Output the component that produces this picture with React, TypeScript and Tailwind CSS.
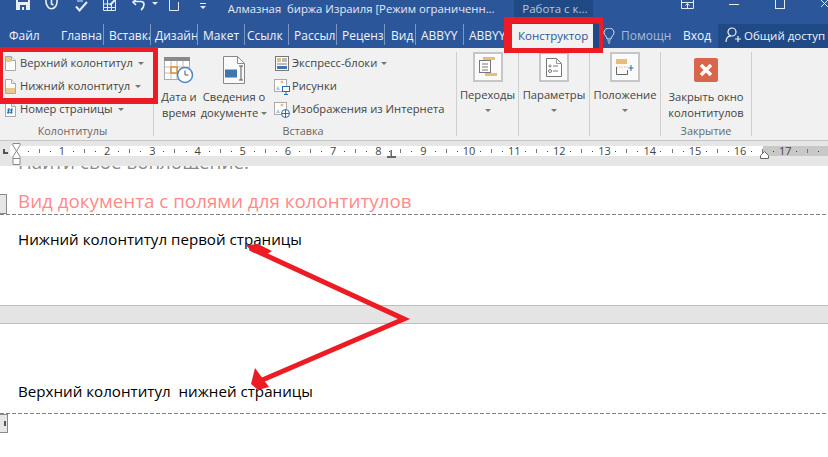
const font = "font-['Open_Sans','Liberation_Sans',sans-serif]";

const tabs = [
  { label: 'Главна', w: 'w-[49px]', pl: 'pl-[6px]' },
  { label: 'Вставка', w: 'w-[47px]', pl: 'pl-[5px]' },
  { label: 'Дизайн', w: 'w-[47px]', pl: 'pl-[4px]' },
  { label: 'Макет', w: 'w-[47px]', pl: 'pl-[5px]' },
  { label: 'Ссылк', w: 'w-[44px]', pl: 'pl-[2px]' },
  { label: 'Рассыл', w: 'w-[48px]', pl: 'pl-[5px]' },
  { label: 'Реценз', w: 'w-[48px]', pl: 'pl-[5px]' },
  { label: 'Вид', w: 'w-[31px]', pl: 'pl-[6px]' },
  { label: 'ABBYY', w: 'w-[48px]', pl: 'pl-[5px]' },
  { label: 'ABBYY', w: 'w-[48px]', pl: 'pl-[5px]' },
];

function PageIcon({ kind }: { kind: 'top' | 'bottom' | 'num' }) {
  return (
    <svg width="12" height="15" viewBox="0 0 12 15" className="shrink-0">
      <path d="M1.500.500h6l4 4v10h-10z" fill="#fff" stroke="#a8a8a8" />
      <path d="M7.500.500v4h4" fill="#eee" stroke="#a8a8a8" />
      {kind === 'top' && <rect x="2" y="1" width="5" height="5" fill="#ecc88f" />}
      {kind === 'bottom' && <rect x="2" y="9" width="9" height="5" fill="#ecc88f" />}
      {kind === 'num' && <path d="M5 6l-1 6M8 6l-1 6M3.200 8h5.600M3 10.200h5.600" stroke="#2b6cb0" strokeWidth="1.100" fill="none" />}
    </svg>
  );
}

function BoxButton({ label, children, w }: { label: string; children: React.ReactNode; w: string }) {
  return (
    <div className={`${w} shrink-0 flex flex-col items-center pt-[4px]`}>
      <div className="w-[30px] h-[30px] border-2 border-[#c6c6c6] bg-[#fafafa] flex items-center justify-center">{children}</div>
      <div className="mt-[4px] leading-[18px] whitespace-nowrap">{label}</div>
      <Caret className="mt-[5px]" />
    </div>
  );
}

function Caret({ className = '' }: { className?: string }) {
  return <span className={`inline-block w-0 h-0 border-x-[3px] border-x-transparent border-t-[3px] border-t-[#777] ${className}`} />;
}

function GroupLabel({ children, className = '' }: { children: React.ReactNode; className?: string }) {
  return <div className={`h-[18px] text-center text-[10.8px] leading-[18px] text-[#666] ${className}`}>{children}</div>;
}

function Sep() {
  return <div className="w-px h-[84px] mt-[4px] bg-[#cfcfcf] shrink-0" />;
}

function RulerCell({ n }: { n?: number }) {
  return (
    <div className={`${n ? 'w-[45.2px]' : 'w-[46px]'} shrink-0 flex items-center`}>
      <span className={`${n ? 'w-[12px]' : 'w-[12.8px]'} text-center text-[11px] leading-[10px]`}>{n}</span>
      <div className="flex-1 flex items-center justify-around">
        <span className="w-px h-px bg-[#444]" />
        <span className="w-px h-[4px] bg-[#777]" />
        <span className="w-px h-px bg-[#444]" />
      </div>
    </div>
  );
}

function Dashed() {
  return <div className="h-px shrink-0 bg-[repeating-linear-gradient(to_right,#808080_0,#808080_4px,transparent_4px,transparent_6px)]" />;
}

export default function App() {
  return (
    <div className={`relative w-[828px] h-[457px] overflow-hidden bg-white flex flex-col ${font}`}>
      {/* title bar */}
      <div className="h-[24px] shrink-0 flex items-start bg-[#2b579a] text-[#e4eaf4]">
        <svg width="14" height="10" viewBox="0 0 14 10" className="ml-[16px]">
          <path d="M0 0h14v10H0z" fill="#e8edf5" />
          <path d="M4 5h6v5H4z" fill="#2b579a" />
          <path d="M6 7h2v3H6z" fill="#e8edf5" />
          <path d="M2 0h10v2H2z" fill="#2b579a" />
        </svg>
        <svg width="13" height="10" viewBox="0 0 13 10" className="ml-[15px]" fill="none" stroke="#e8edf5" strokeWidth="1.600">
          <path d="M1 0c-.5 4 2 8.800 5.500 8.800S12.500 5 12 0" />
          <path d="M6.500 0v4l2 1" />
        </svg>
        <svg width="13" height="12" viewBox="0 0 13 12" className="ml-[17px]" fill="none" stroke="#e8edf5" strokeWidth="2">
          <path d="M1 6.500l3.500 4L12 2" />
          <path d="M2 1h6" strokeWidth="1" />
        </svg>
        <svg width="13" height="11" viewBox="0 0 13 11" className="ml-[15px]" fill="none" stroke="#e8edf5">
          <path d="M.5 0v10.500h12V0M.5 4h8M.5 7.500h12M4.500 0v10.500M8.500 4v6.500" />
          <path d="M7 5l5-5" strokeWidth="2" />
        </svg>
        <svg width="14" height="11" viewBox="0 0 14 11" className="ml-[16px]" fill="none" stroke="#e8edf5" strokeWidth="1.700">
          <path d="M1 1.500h8c4 0 4 5 0 8.500" />
          <path d="M4 0L1 2l3 3" />
        </svg>
        <span className="ml-[6px] mt-[2px] w-0 h-0 border-x-[3px] border-x-transparent border-t-[3px] border-t-[#e8edf5]" />
        <svg width="10" height="11" viewBox="0 0 10 11" className="ml-[11px]" fill="none" stroke="#e8edf5">
          <path d="M.5 0v10.500h9V2" />
        </svg>
        <div className="ml-[21px] mt-[3px] w-[6px] flex flex-col items-center">
          <span className="w-[6px] h-px bg-[#e8edf5]" />
          <span className="mt-[2px] w-0 h-0 border-x-[3px] border-x-transparent border-t-[3px] border-t-[#e8edf5]" />
        </div>
        <div className="ml-[22px] w-[268px] h-[18px] text-[11.3px] leading-[18px] whitespace-pre overflow-hidden">Алмазная  биржа Израиля [Режим ограниченн...</div>
        <div className="ml-[19px] w-[79px] h-[17px] pl-[8px] bg-[#1f4a86] text-[#b9c6db] text-[11.5px] leading-[17px] whitespace-nowrap">Работа с к...</div>
        <svg width="13" height="9" viewBox="0 0 13 9" className="ml-[88px]" fill="none" stroke="#e8edf5">
          <path d="M.5 0v8.500h12V0M.5 2.500h12M6.500 8V4M4.500 5.500l2-2 2 2" />
        </svg>
        <span className="ml-[35px] mt-[4px] w-[10px] h-px bg-[#e8edf5]" />
        <span className="ml-[36px] w-[10px] h-[9px] border border-t-0 border-[#e8edf5]" />
        <svg width="7" height="7" viewBox="0 0 7 7" className="ml-[36px]" fill="none" stroke="#e8edf5">
          <path d="M0 0l7 7M7 0L0 7" />
        </svg>
      </div>

      {/* tabs */}
      <div className="h-[24px] shrink-0 flex items-start bg-[#2b579a] text-[#f0f3f8] text-[12px] whitespace-nowrap">
        <div className="w-[55px] pl-[9px] pt-[3px] leading-[18px]">Файл</div>
        {tabs.map((t, i) => (
          <div key={i} className={`${t.w} ${t.pl} h-[21px] pt-[3px] leading-[18px] overflow-hidden border-r border-[#7b97c2]`}>{t.label}</div>
        ))}
        <div className="w-[81px] h-[24px] bg-[#f1f1f1] text-[#2b579a] pl-[6px] pt-[3px] leading-[18px] text-[11.5px]">Конструктор</div>
        <div className="w-[6px] h-[24px] bg-[#1f4a86]" />
        <svg width="12" height="16" viewBox="0 0 12 16" className="ml-[4px] mt-[4px]" fill="none" stroke="#dfe6f1">
          <path d="M4 11c0-3-3-3.500-3-6.500a5 4.500 0 0 1 10 0c0 3-3 3.500-3 6.500zM4.500 13h3M5 15h2" />
        </svg>
        <div className="ml-[6px] w-[62px] pt-[3px] leading-[18px] text-[#a9bbd8]">Помощн</div>
        <div className="w-[35px] pt-[3px] leading-[18px]">Вход</div>
        <div className="w-[110px] h-[24px] bg-[#1f4a86] pt-[3px] flex items-start">
          <svg width="16" height="16" viewBox="0 0 16 16" className="ml-[7px] shrink-0" fill="none" stroke="#f0f3f8" strokeWidth="1.200">
            <circle cx="7" cy="5" r="4" />
            <path d="M1 15c0-4 2.500-6 5-6.200M10 12h6M13 9v6" />
          </svg>
          <span className="ml-[3px] leading-[18px] text-[11.5px]">Общий доступ</span>
        </div>
      </div>

      {/* ribbon */}
      <div className="h-[93px] shrink-0 flex items-start bg-[#f1f1f1] border-b border-[#c6c6c6] text-[#444] text-[11.2px] whitespace-nowrap">
        <div className="w-[153px] shrink-0 flex flex-col h-full">
          <div className="flex-1 pt-[4px]">
            <div className="h-[23px] pl-[4px] flex items-center gap-[4px]"><PageIcon kind="top" />Верхний колонтитул<Caret className="ml-[1px]" /></div>
            <div className="h-[23px] pl-[4px] flex items-center gap-[4px]"><PageIcon kind="bottom" />Нижний колонтитул<Caret className="ml-[1px]" /></div>
            <div className="h-[23px] pl-[4px] flex items-center gap-[4px]"><PageIcon kind="num" />Номер страницы<Caret className="ml-[1px]" /></div>
          </div>
          <GroupLabel className="pr-[8px]">Колонтитулы</GroupLabel>
        </div>
        <Sep />
        <div className="w-[302px] shrink-0 flex flex-col h-full">
          <div className="flex-1 flex items-start">
            <div className="w-[50px] flex flex-col items-center pt-[9px]">
              <svg width="30" height="27" viewBox="0 0 30 27" fill="none">
                <rect x="0.500" y="0.500" width="25" height="22" fill="#fff" stroke="#aaa" />
                <rect x="0" y="0" width="26" height="4" fill="#8a8a8a" />
                <path d="M7 4v19M13 4v19M19 4v19M1 10h25M1 16h25" stroke="#bbb" />
                <rect x="7" y="10" width="6" height="6" stroke="#e08a3c" strokeWidth="1.500" fill="#fff" />
                <circle cx="21" cy="18" r="7.500" fill="#fff" stroke="#4a86c5" strokeWidth="1.500" />
                <path d="M21 13.500V18h3.500" stroke="#555" />
              </svg>
              <div className="mt-[5px] text-center leading-[16px]">Дата и<br />время</div>
            </div>
            <div className="w-[60px] flex flex-col items-center pt-[8px]">
              <svg width="22" height="28" viewBox="0 0 22 28" fill="none">
                <path d="M.5.500h14l7 7v20H.5z" fill="#fafafa" stroke="#888" />
                <path d="M14.500.500v7h7" stroke="#888" />
                <rect x="2.500" y="14" width="11" height="7" fill="#3f76b0" stroke="#3f76b0" />
                <path d="M16 10h4M18 10v14M16 24h4" stroke="#555" />
              </svg>
              <div className="mt-[5px] text-center leading-[16px]">Сведения о<br />документе<Caret className="ml-[3px] mb-[2px]" /></div>
            </div>
            <div className="ml-[11px] pt-[4px] flex flex-col">
              <div className="h-[23px] flex items-center gap-[3px]">
                <svg width="14" height="15" viewBox="0 0 14 15" fill="none" className="shrink-0">
                  <rect x="0.500" y="0.500" width="13" height="14" fill="#fff" stroke="#777" />
                  <rect x="2" y="2" width="4" height="4" fill="#e8bd78" />
                  <path d="M7 3h5M7 5h5M2 8h10" stroke="#777" />
                  <rect x="2" y="10" width="10" height="3" fill="#3f76b0" />
                </svg>
                <span>Экспресс-блоки</span><Caret className="ml-[1px]" />
              </div>
              <div className="h-[23px] flex items-center gap-[2px]">
                <svg width="16" height="16" viewBox="0 0 16 16" fill="none" className="shrink-0 -ml-[1px]">
                  <rect x="0.500" y="0.500" width="12" height="12" fill="#fff" stroke="#aaa" />
                  <path d="M2 11l2-4 2 4z" fill="#a9c4e0" />
                  <circle cx="8" cy="3" r="1.500" fill="#e8bd78" />
                  <rect x="8.500" y="7.500" width="7" height="5" fill="#fff" stroke="#2b6cb0" />
                  <path d="M12 13v2M10 15.500h4" stroke="#2b6cb0" />
                </svg>
                <span>Рисунки</span>
              </div>
              <div className="h-[23px] flex items-center gap-[2px]">
                <svg width="16" height="16" viewBox="0 0 16 16" fill="none" className="shrink-0 -ml-[1px]">
                  <rect x="0.500" y="0.500" width="12" height="12" fill="#fff" stroke="#aaa" />
                  <path d="M2 11l2-4 2 4z" fill="#a9c4e0" />
                  <circle cx="8" cy="3" r="1.500" fill="#e8bd78" />
                  <circle cx="11.500" cy="11.500" r="4" fill="#fff" stroke="#2b6cb0" />
                  <path d="M7.500 11.500h8M11.500 7.500v8" stroke="#2b6cb0" />
                </svg>
                <span>Изображения из Интернета</span>
              </div>
            </div>
          </div>
          <GroupLabel className="pr-[4px]">Вставка</GroupLabel>
        </div>
        <Sep />
        <BoxButton w="w-[61px]" label="Переходы">
          <svg width="20" height="20" viewBox="0 0 20 20" fill="none">
            <rect x="5" y="0" width="12" height="3" fill="#e8bd78" />
            <rect x="7" y="16" width="12" height="3" fill="#e8bd78" />
            <rect x="1.500" y="3.500" width="11" height="12" fill="#fff" stroke="#777" />
            <path d="M4 7h6M4 10h6M4 13h6" stroke="#777" />
          </svg>
        </BoxButton>
        <Sep />
        <BoxButton w="w-[70px]" label="Параметры">
          <svg width="16" height="20" viewBox="0 0 16 20" fill="none">
            <path d="M.5 1.500h10l5 5v13H.5z" fill="#fff" stroke="#777" />
            <path d="M10.500 1.500v5h5" stroke="#999" />
            <circle cx="4" cy="9" r="1.500" fill="#999" />
            <circle cx="4" cy="14" r="1.500" stroke="#777" />
            <path d="M7 9h5M7 14h5" stroke="#777" />
          </svg>
        </BoxButton>
        <Sep />
        <BoxButton w="w-[70px]" label="Положение">
          <svg width="18" height="16" viewBox="0 0 18 16" fill="none">
            <rect x="0" y="0" width="11" height="5" fill="#e8bd78" />
            <path d="M.5 8h11" stroke="#e8bd78" strokeDasharray="1.500 1" />
            <path d="M.5 8v7.500h11V11" stroke="#666" />
            <path d="M15 6v6M12.500 9h5" stroke="#2b6cb0" />
          </svg>
        </BoxButton>
        <Sep />
        <div className="w-[90px] shrink-0 flex flex-col h-full">
          <div className="flex-1 flex flex-col items-center pt-[10px]">
            <svg width="24" height="24" viewBox="0 0 24 24">
              <rect width="24" height="24" rx="2" fill="#d9654a" />
              <path d="M7 7l10 10M17 7L7 17" stroke="#fff" strokeWidth="3.500" />
            </svg>
            <div className="mt-[7px] text-center leading-[16px]">Закрыть окно<br />колонтитулов</div>
          </div>
          <GroupLabel>Закрытие</GroupLabel>
        </div>
        <Sep />
      </div>

      {/* ruler */}
      <div className="h-[25px] shrink-0 bg-[#e6e6e6] pt-[5px]">
        <div className="h-[10px] flex text-[#444] bg-[linear-gradient(to_right,#fff_763px,#c8c8c8_763px)]">
          <div className="w-[10px] shrink-0 bg-[#e6e6e6] flex items-center justify-center">
            <span className="w-[5px] h-[5px] border-l-2 border-b-2 border-[#555]" />
          </div>
          <RulerCell />
          {Array.from({ length: 17 }, (_, i) => (
            <RulerCell key={i} n={i + 1} />
          ))}
        </div>
      </div>

      {/* document */}
      <div className="flex-1 flex flex-col bg-white overflow-hidden">
        <div className="h-[3px] shrink-0 pl-[18px] flex items-end overflow-hidden text-[#8a8a8a] text-[18.8px] leading-[14px] whitespace-nowrap">Найти своё воплощение.</div>
        <div className="h-[25px] shrink-0 mt-[20px] flex items-end">
          <div className="w-[7px] h-[20px] bg-[#e6e6e6] border border-l-0 border-[#8a8a8a]" />
          <div className="ml-[11px] text-[18.8px] leading-[25px] text-[#ff8a8a] whitespace-nowrap">Вид документа с полями для колонтитулов</div>
        </div>
        <Dashed />
        <div className="h-[90px] shrink-0 pl-[18px] pt-[14px] text-[15.15px] leading-[20px] text-black">Нижний колонтитул первой страницы</div>
        <div className="h-[19px] shrink-0 bg-[#e4e4e4] border-y border-[#bfbfbf]" />
        <div className="h-[89px] shrink-0 pl-[18px] flex items-end pb-[12px] text-[15.15px] leading-[20px] text-black whitespace-pre">Верхний колонтитул  нижней страницы</div>
        <Dashed />
        <div className="w-[8px] h-[19px] bg-[#e6e6e6] border border-l-0 border-[#8a8a8a] flex items-center justify-end">
          <span className="w-[2px] h-[5px] bg-[#555] mr-[1px]" />
        </div>
      </div>

      {/* ruler markers over the strip */}
      <svg width="10" height="23" viewBox="0 0 10 23" className="absolute left-[12px] top-[143px]" fill="#fff" stroke="#8a8a8a">
        <path d="M1 .5h7v2L4.500 8 1 2.500zM4.500 8L8 13.500v2H1v-2zM1 15.500h7v6H1z" />
      </svg>
      <svg width="9" height="9" viewBox="0 0 9 9" className="absolute left-[387px] top-[150px]" fill="#666">
        <path d="M3.500 0h1.500v6H9v2H0V6h3.500z" />
      </svg>
      <svg width="9" height="8" viewBox="0 0 9 8" className="absolute left-[760px] top-[151px]" fill="#fff" stroke="#666">
        <path d="M4.500.5l4 4v3h-8v-3z" />
      </svg>

      {/* red annotations */}
      <div className="absolute left-[504px] top-[17px] w-[99px] h-[36px] border-t-[6px] border-b-[5px] border-l-[8px] border-r-[4px] border-[#ed1c24]" />
      <div className="absolute left-0 top-[47px] w-[158px] h-[57px] border-t-[5px] border-b-[6px] border-l-[3px] border-r-[5px] border-[#ed1c24]" />
      <svg width="828" height="457" viewBox="0 0 828 457" className="absolute left-0 top-0 pointer-events-none">
        <path d="M250 248L404 319L260 381" fill="none" stroke="#ed1c24" strokeWidth="5" />
        <path d="M246 245L258 244L272 251L264 256L252 252z" fill="#ed1c24" />
        <path d="M255 368L269 387L258 390L251 384z" fill="#ed1c24" />
      </svg>
    </div>
  );
}
